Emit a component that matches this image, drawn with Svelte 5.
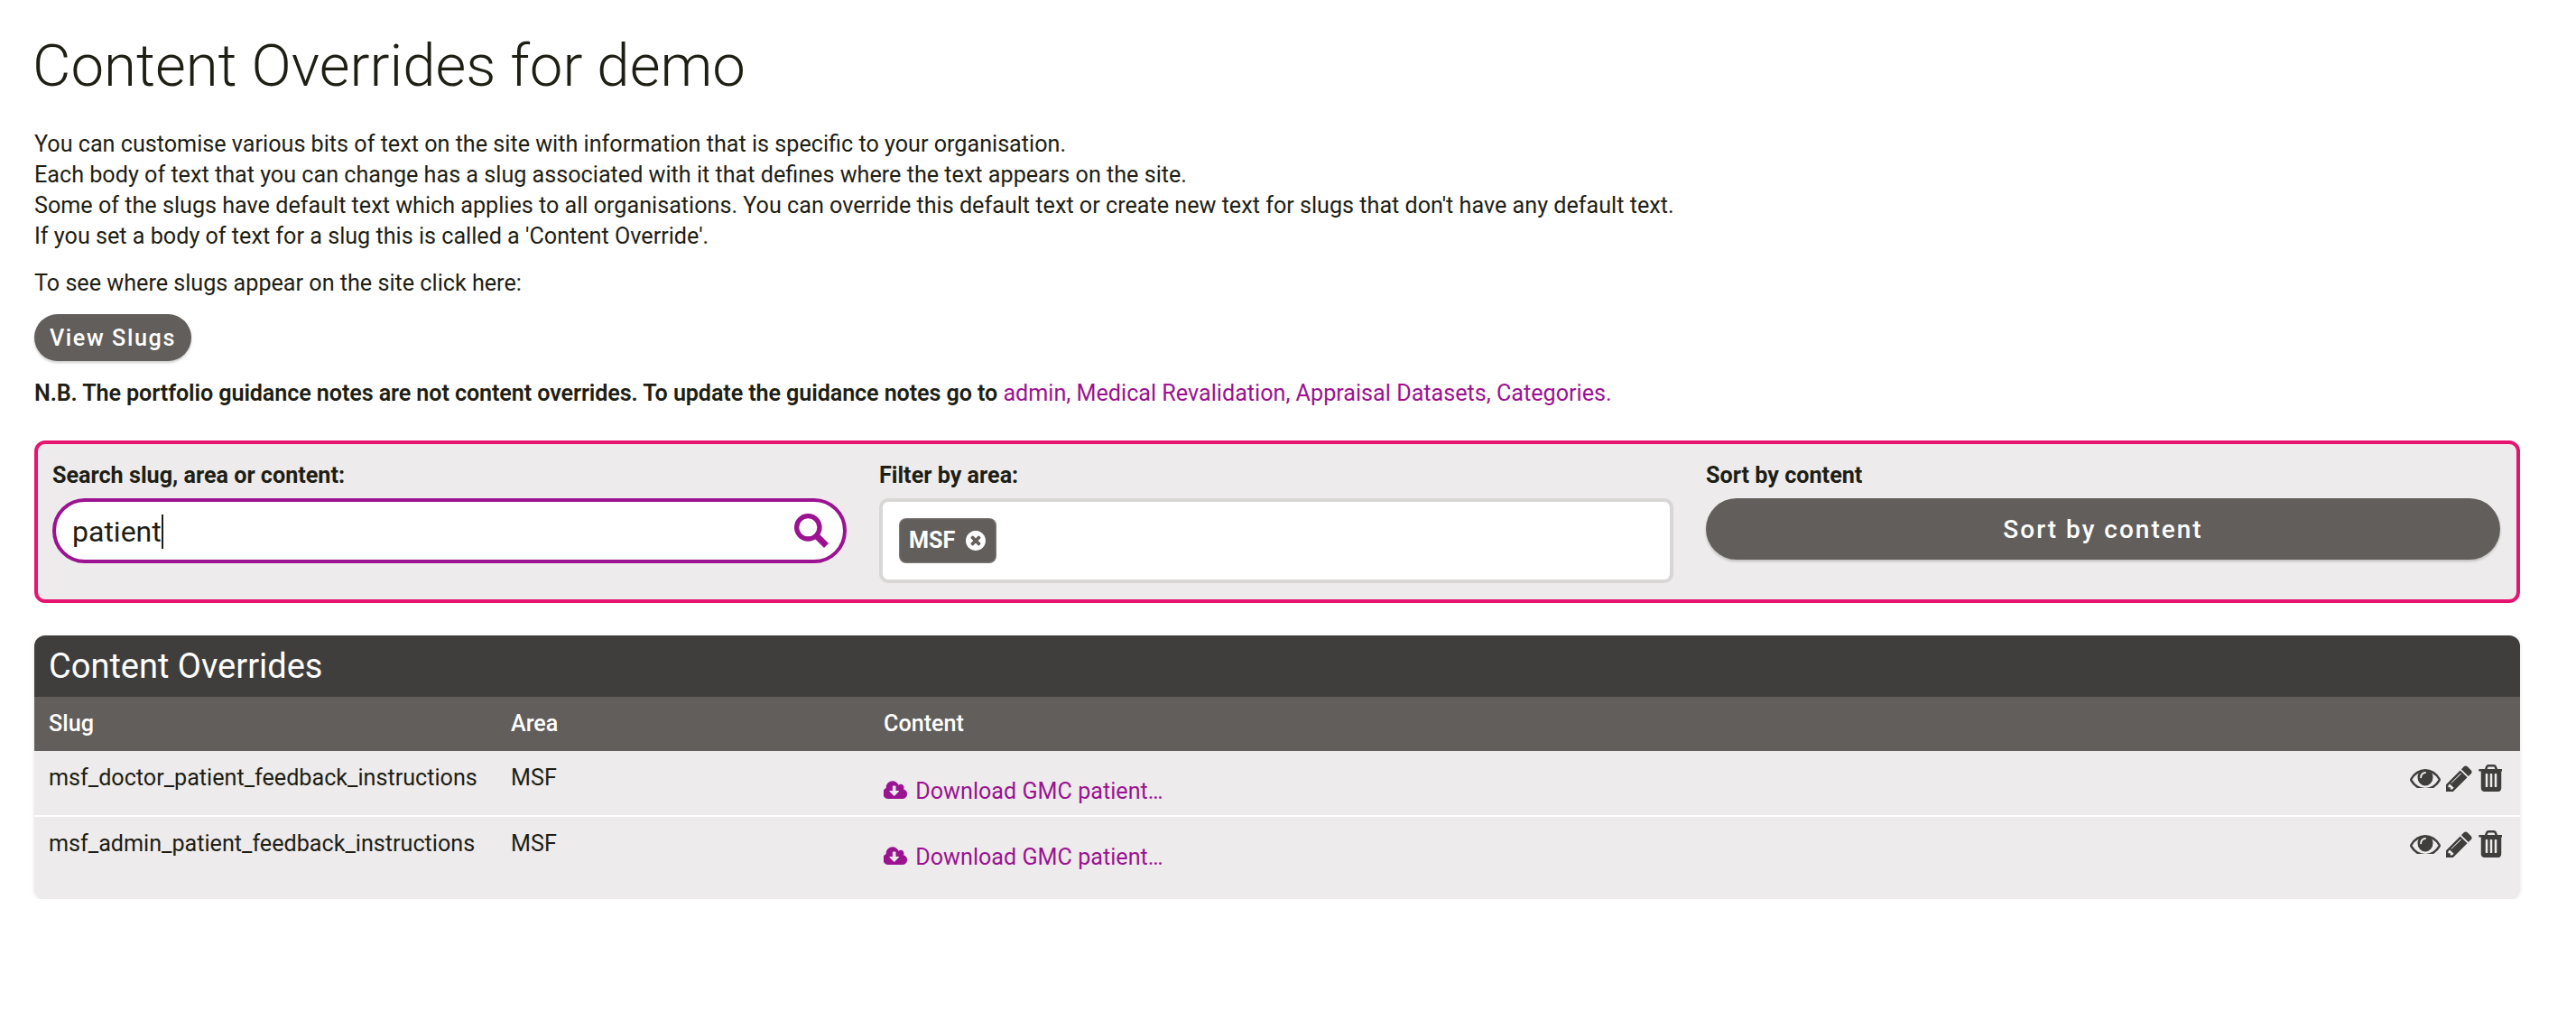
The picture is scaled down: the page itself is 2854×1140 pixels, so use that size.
<script lang="ts">
	const rows = [
		{ slug: 'msf_doctor_patient_feedback_instructions', area: 'MSF', content: 'Download GMC patient…' },
		{ slug: 'msf_admin_patient_feedback_instructions', area: 'MSF', content: 'Download GMC patient…' }
	];

	const eye =
		'M1664 960q-152-236-381-353 61 104 61 225 0 185-131.500 316.500t-316.500 131.500-316.500-131.500-131.500-316.500q0-121 61-225-229 117-381 353 133 205 333.500 326.500t434.500 121.500 434.500-121.500 333.500-326.500zm-720-384q0-20-14-34t-34-14q-125 0-214.500 89.500t-89.500 214.500q0 20 14 34t34 14 34-14 14-34q0-86 61-147t147-61q20 0 34-14t14-34zm848 384q0 34-20 69-140 230-376.500 368.500t-499.500 138.500-499.500-139-376.500-368q-20-35-20-69t20-69q140-229 376.500-368t499.500-139 499.500 139 376.500 368q20 35 20 69z';
	const pencil =
		'M491 1536l91-91-235-235-91 91v107h128v128h107zm523-928q0-22-22-22-10 0-17 7l-542 542q-7 7-7 17 0 22 22 22 10 0 17-7l542-542q7-7 7-17zm-54-192l416 416-832 832h-416v-416zm683 96q0 53-37 90l-166 166-416-416 166-165q36-38 90-38 53 0 91 38l235 234q37 39 37 91z';
	const trash =
		'M704 1376v-704q0-14-9-23t-23-9h-64q-14 0-23 9t-9 23v704q0 14 9 23t23 9h64q14 0 23-9t9-23zm256 0v-704q0-14-9-23t-23-9h-64q-14 0-23 9t-9 23v704q0 14 9 23t23 9h64q14 0 23-9t9-23zm256 0v-704q0-14-9-23t-23-9h-64q-14 0-23 9t-9 23v704q0 14 9 23t23 9h64q14 0 23-9t9-23zm-544-992h448l-48-117q-7-9-17-11h-317q-10 2-17 11zm928 32v64q0 14-9 23t-23 9h-96v948q0 83-47 143.500t-113 60.500h-832q-66 0-113-58.500t-47-141.500v-952h-96q-14 0-23-9t-9-23v-64q0-14 9-23t23-9h309l70-167q15-37 54-63t79-26h320q40 0 79 26t54 63l70 167h309q14 0 23 9t9 23z';
	const cloud =
		'M1216 928q0-14-9-23t-23-9h-224v-352q0-13-9.500-22.500t-22.500-9.500h-192q-13 0-22.500 9.500t-9.500 22.500v352h-224q-13 0-22.500 9.500t-9.500 22.500q0 14 9 23l352 352q9 9 23 9t23-9l351-351q10-12 10-24zm640 224q0 159-112.500 271.500t-271.500 112.500h-1088q-185 0-316.500-131.500t-131.500-316.500q0-130 70-240t188-165q-2-30-2-43 0-212 150-362t362-150q156 0 285.500 87t188.500 231q71-62 166-62 106 0 181 75t75 181q0 76-41 138 130 31 213.500 135.500t83.500 238.500z';
	const timesCircle =
		'M1277 1122q0-26-19-45l-181-181 181-181q19-19 19-45 0-27-19-46l-90-90q-19-19-46-19-26 0-45 19l-181 181-181-181q-19-19-45-19-27 0-46 19l-90 90q-19 19-19 46 0 26 19 45l181 181-181 181q-19 19-19 45 0 27 19 46l90 90q19 19 46 19 26 0 45-19l181-181 181 181q19 19 45 19 27 0 46-19l90-90q19-19 19-46zm387-226q0 209-103 385.500t-279.500 279.500-385.500 103-385.500-103-279.500-279.500-103-385.500 103-385.500 279.500-279.500 385.500-103 385.500 103 279.500 279.500 103 385.500z';
</script>

<main>
	<h1>Content Overrides for demo</h1>

	<p>
		You can customise various bits of text on the site with information that is specific to your organisation.<br />
		Each body of text that you can change has a slug associated with it that defines where the text appears on the site.<br />
		Some of the slugs have default text which applies to all organisations. You can override this default text or create new text for slugs that don't have any default text.<br />
		If you set a body of text for a slug this is called a 'Content Override'.
	</p>
	<p class="see">To see where slugs appear on the site click here:</p>

	<button class="btn small">View Slugs</button>

	<p class="note">
		<strong>N.B. The portfolio guidance notes are not content overrides. To update the guidance notes go to</strong>
		<a href="#admin">admin, Medical Revalidation, Appraisal Datasets, Categories.</a>
	</p>

	<section class="filters">
		<div class="field">
			<label for="search">Search slug, area or content:</label>
			<div class="search" id="search">
				<span>patient</span><span class="caret"></span>
				<svg class="lens" viewBox="0 0 38 38" aria-hidden="true">
					<circle cx="15.3" cy="15.3" r="12.7" fill="none" stroke="currentColor" stroke-width="5.3" />
					<path d="M24 24l11.5 11.5" stroke="currentColor" stroke-width="7" />
				</svg>
			</div>
		</div>
		<div class="field">
			<span class="label">Filter by area:</span>
			<div class="select">
				<span class="chip">
					MSF
					<svg viewBox="128 128 1536 1536" aria-hidden="true"><path d={timesCircle} /></svg>
				</span>
			</div>
		</div>
		<div class="field">
			<span class="label">Sort by content</span>
			<button class="btn wide">Sort by content</button>
		</div>
	</section>

	<section class="panel">
		<h2>Content Overrides</h2>
		<table>
			<thead>
				<tr>
					<th class="c-slug">Slug</th>
					<th class="c-area">Area</th>
					<th>Content</th>
					<th class="c-actions"></th>
				</tr>
			</thead>
			<tbody>
				{#each rows as row}
					<tr>
						<td>{row.slug}</td>
						<td>{row.area}</td>
						<td class="content">
							<a href="#download">
								<svg class="cloud" viewBox="0 128 1920 1536" aria-hidden="true"><path d={cloud} /></svg>
								{row.content}
							</a>
						</td>
						<td>
							<div class="actions">
								<svg class="eye" viewBox="0 384 1792 1024" preserveAspectRatio="none" aria-hidden="true"><path d={eye} /></svg>
								<svg class="pencil" viewBox="128 128 1536 1536" aria-hidden="true"><path d={pencil} /></svg>
								<svg class="trash" viewBox="128 128 1408 1536" aria-hidden="true"><path d={trash} /></svg>
							</div>
						</td>
					</tr>
				{/each}
			</tbody>
		</table>
	</section>
</main>

<style>
	:global(body) {
		background: #fff;
		color: #1e1e14;
		font-family: Roboto, 'Liberation Sans', sans-serif;
		font-size: 25.17px;
		line-height: 34px;
	}

	main {
		padding: 1px 62px 0 38px;
	}

	h1 {
		font-size: 65.3px;
		font-weight: 300;
		line-height: 80px;
		margin: 0 0 0 -2px;
		padding: 32px 0 30px;
	}

	p {
		margin: 0;
	}

	.see {
		margin-top: 18px;
	}

	.btn {
		background: #625e5b;
		border: 0;
		border-radius: 40px;
		box-shadow: 0 2px 3px rgba(0, 0, 0, 0.2);
		color: #fff;
		display: block;
		font-family: inherit;
		font-weight: 500;
		letter-spacing: 2px;
	}

	.btn.small {
		font-size: 25.2px;
		height: 52px;
		letter-spacing: 1.6px;
		margin-top: 17px;
		padding: 0;
		width: 174px;
	}

	.btn.wide {
		font-size: 28px;
		height: 68px;
		width: 100%;
	}

	.note {
		margin-top: 19px;
	}

	.note strong {
		font-weight: 600;
		letter-spacing: -0.105px;
	}

	a {
		color: #9b1391;
		text-decoration: none;
	}

	.filters {
		background: #edebec;
		border: 4px solid #e6146f;
		border-radius: 12px;
		box-sizing: border-box;
		display: grid;
		gap: 36px;
		grid-template-columns: repeat(3, 1fr);
		height: 180px;
		margin-top: 35px;
		padding: 18px 18px 18px 16px;
	}

	label,
	.label {
		display: block;
		font-weight: 700;
		height: 42px;
		line-height: 34px;
	}

	.search {
		align-items: center;
		background: #fff;
		border: 4px solid #9b1391;
		border-radius: 40px;
		box-sizing: border-box;
		display: flex;
		font-size: 32px;
		height: 72px;
		padding: 2px 16px 0 18px;
	}

	.caret {
		background: #1e1e14;
		height: 38px;
		width: 2px;
	}

	.lens {
		color: #9b1391;
		height: 38px;
		margin: -2px 0 0 auto;
		width: 38px;
	}

	.select {
		background: #fff;
		border: 4px solid #d8d7d6;
		border-radius: 10px;
		box-sizing: border-box;
		height: 94px;
		padding: 18px;
	}

	.chip {
		align-items: center;
		background: #625e5b;
		border-radius: 8px;
		box-shadow: inset 0 0 2px rgba(255, 255, 255, 0.6);
		box-sizing: border-box;
		color: #fff;
		display: inline-flex;
		font-weight: 700;
		gap: 12px;
		height: 50px;
		padding: 0 12px 0 11px;
	}

	.chip svg {
		fill: #fff;
		height: 22px;
		width: 22px;
	}

	.panel {
		background: #edebec;
		border-radius: 12px;
		box-shadow: 0 1px 4px rgba(0, 0, 0, 0.12);
		margin-top: 36px;
		overflow: hidden;
	}

	h2 {
		background: #403e3c;
		box-sizing: border-box;
		color: #fff;
		font-size: 38px;
		font-weight: 400;
		height: 68px;
		line-height: 68px;
		margin: 0;
		padding: 0 16px 2px;
	}

	table {
		border-collapse: collapse;
		table-layout: fixed;
		width: 100%;
	}

	th,
	td {
		box-sizing: border-box;
		padding: 0 16px;
		text-align: left;
	}

	th {
		background: #625e5b;
		color: #fff;
		font-weight: 500;
		height: 60px;
	}

	.c-slug {
		width: 512px;
	}

	.c-area {
		width: 413px;
	}

	.c-actions {
		width: 160px;
	}

	td {
		padding-top: 13px;
		vertical-align: top;
	}

	tbody tr {
		height: 72px;
	}

	tbody tr + tr {
		border-top: 2px solid #fff;
		height: 92px;
	}

	td.content {
		padding-top: 28px;
	}

	.cloud {
		fill: #9b1391;
		height: 22px;
		margin-right: 2px;
		vertical-align: -2px;
		width: 27px;
	}

	.actions {
		align-items: center;
		display: flex;
		gap: 6px;
		justify-content: flex-end;
		margin-right: 4px;
		padding-top: 2px;
	}

	.actions svg {
		fill: #403e3c;
	}

	.eye {
		height: 21px;
		width: 34px;
	}

	.pencil {
		height: 29px;
		width: 29px;
	}

	.trash {
		height: 30px;
		width: 27.5px;
	}
</style>
